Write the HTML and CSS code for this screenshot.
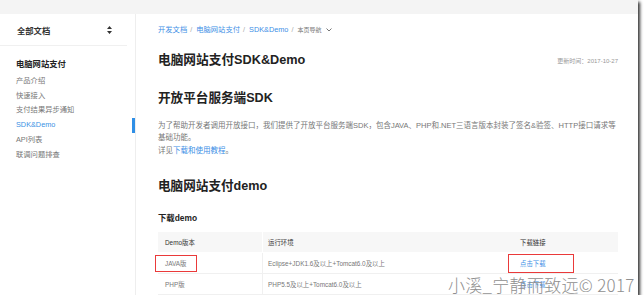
FILE: index.html
```html
<!DOCTYPE html>
<html lang="zh-CN">
<head>
    <meta charset="UTF-8">
    <title>电脑网站支付SDK&amp;Demo</title>
    <link rel="stylesheet" href="styles.css">
</head>
<body>
    <div class="shot">
        <div class="topbar"></div>
        <div class="layout">
            <div class="sidebar">
                <div class="doc-select">
                    <span>全部文档</span>
                    <svg class="sort-icon" width="5" height="8" viewBox="0 0 5 8">
                        <path d="M2.5 0 L5 3 L0 3 Z M2.5 8 L5 5 L0 5 Z" fill="#333"/>
                    </svg>
                </div>
                <div class="nav">
                    <div class="nav-title">电脑网站支付</div>
                    <div class="nav-item">产品介绍</div>
                    <div class="nav-item">快速接入</div>
                    <div class="nav-item">支付结果异步通知</div>
                    <div class="nav-item active">SDK&amp;Demo</div>
                    <div class="nav-item">API列表</div>
                    <div class="nav-item">联调问题排查</div>
                </div>
            </div>

            <div class="main">
                <div class="crumbs">
                    <a href="#">开发文档</a><span class="sep">/</span>
                    <a href="#">电脑网站支付</a><span class="sep">/</span>
                    <a href="#">SDK&amp;Demo</a><span class="sep">/</span>
                    <span class="page-nav">本页导航</span>
                    <svg class="chevron" width="6" height="4" viewBox="0 0 6 4">
                        <polyline points="0.5,0.5 3,3 5.5,0.5" fill="none" stroke="#666" stroke-width="0.9"/>
                    </svg>
                </div>

                <div class="title-row">
                    <h1>电脑网站支付SDK&amp;Demo</h1>
                    <span class="updated">更新时间：2017-10-27</span>
                </div>

                <h2>开放平台服务端SDK</h2>
                <p class="text">为了帮助开发者调用开放接口，我们提供了开放平台服务端SDK，包含JAVA、PHP和.NET三语言版本封装了签名&amp;验签、HTTP接口请求等基础功能。<br>详见<a href="#">下载和使用教程</a>。</p>

                <h2 class="section">电脑网站支付demo</h2>
                <h3>下载demo</h3>

                <table class="demo-table">
                    <tr>
                        <th class="col-ver">Demo版本</th>
                        <th class="col-env">运行环境</th>
                        <th class="col-dl">下载链接</th>
                    </tr>
                    <tr>
                        <td><span class="mark mark-java">JAVA版</span></td>
                        <td class="col-env">Eclipse+JDK1.6及以上+Tomcat6.0及以上</td>
                        <td><a href="#" class="mark mark-dl">点击下载</a></td>
                    </tr>
                    <tr>
                        <td>PHP版</td>
                        <td class="col-env">PHP5.5及以上+Tomcat6.0及以上</td>
                        <td><a href="#">点击下载</a></td>
                    </tr>
                </table>
            </div>
        </div>
        <div class="watermark">小溪_宁静而致远© 2017</div>
    </div>
</body>
</html>
```

FILE: styles.css
```css
body {
    margin: 0;
    background-color: #ffffff;
    font-family: "Liberation Sans", "Noto Sans CJK SC", sans-serif;
}

.shot {
    position: relative;
    width: 638px;
    height: 295px;
    overflow: hidden;
    background-color: #ffffff;
    box-shadow: 2px 2px 3px rgba(0, 0, 0, 0.8);
    display: flex;
    flex-direction: column;
}

.topbar {
    height: 15px;
    background-color: #f4f4f4;
}

.layout {
    display: flex;
    flex: 1;
}

/* left column */
.sidebar {
    width: 135px;
    border-right: 1px solid #eeeeee;
}

.doc-select {
    height: 30px;
    margin-right: 8px;
    padding: 1px 15px 0 17px;
    display: flex;
    align-items: center;
    justify-content: space-between;
    border-bottom: 1px solid #f0f0f0;
    font-size: 8.3px;
    font-weight: bold;
    color: #333333;
}

.nav {
    padding-top: 12px;
}

.nav-title {
    padding-left: 16px;
    line-height: 12px;
    margin-bottom: 4px;
    font-size: 8.3px;
    font-weight: bold;
    color: #222222;
}

.nav-item {
    padding-left: 16px;
    line-height: 14.7px;
    font-size: 7.3px;
    color: #777777;
}

.nav-item.active {
    color: #3a92e4;
    box-shadow: inset -3px 0 0 #2f8fe6;
}

/* content */
.main {
    flex: 1;
    padding: 10px 20px 0 22px;
}

.crumbs {
    display: flex;
    align-items: center;
    line-height: 12px;
    font-size: 7.3px;
}

.crumbs a {
    color: #3d8fe6;
    text-decoration: none;
}

.crumbs .sep {
    color: #aaaaaa;
    margin: 0 4px 0 3px;
}

.crumbs .page-nav {
    font-size: 6px;
    color: #777777;
}

.chevron {
    margin-left: 5px;
}

.title-row {
    display: flex;
    align-items: center;
    justify-content: space-between;
    margin-top: 15px;
}

h1, h2, h3 {
    margin: 0;
    color: #222222;
}

h1 {
    font-size: 12.7px;
    line-height: 18px;
}

.updated {
    font-size: 6px;
    color: #999999;
}

h2 {
    margin-top: 20px;
    font-size: 12.6px;
    line-height: 18px;
}

.text {
    margin: 12.5px 0 0;
    font-size: 7.5px;
    line-height: 12.5px;
    color: #777777;
}

.text a {
    color: #3d8fe6;
    text-decoration: none;
}

h2.section {
    margin-top: 20px;
}

h3 {
    margin-top: 17px;
    font-size: 8.4px;
    line-height: 12px;
}

.demo-table {
    margin-top: 8px;
    width: 100%;
    border-collapse: collapse;
    font-size: 6.4px;
    color: #777777;
}

.demo-table th,
.demo-table td {
    height: 20px;
    padding: 0 0 0 7px;
    text-align: left;
    border-bottom: 1px solid #f0f0f0;
}

.demo-table th {
    background-color: #f7f7f7;
    font-weight: normal;
    color: #333333;
    border-bottom-color: #ffffff;
}

.demo-table .col-ver {
    width: 97px;
}

.demo-table .col-env {
    width: 245px;
    border-left: 1px solid #f0f0f0;
    padding-left: 5px;
}

.demo-table th.col-env {
    border-left-color: #ffffff;
}

.demo-table a {
    color: #3d8fe6;
    text-decoration: none;
}

/* red annotation boxes drawn over the cells */
.mark {
    position: relative;
}

.mark::after {
    content: "";
    position: absolute;
    border: 1.5px solid #ea3a3a;
}

.mark-java::after {
    left: -10px;
    right: -11px;
    top: -5px;
    bottom: -5px;
}

.mark-dl::after {
    left: -12px;
    right: -28px;
    top: -6px;
    bottom: -6px;
}

.watermark {
    position: absolute;
    left: 448px;
    top: 275px;
    font-family: "Noto Sans CJK SC", sans-serif;
    font-weight: 300;
    font-size: 17px;
    letter-spacing: 0.3px;
    line-height: 20px;
    color: #8f8f8f;
    white-space: nowrap;
}
```
